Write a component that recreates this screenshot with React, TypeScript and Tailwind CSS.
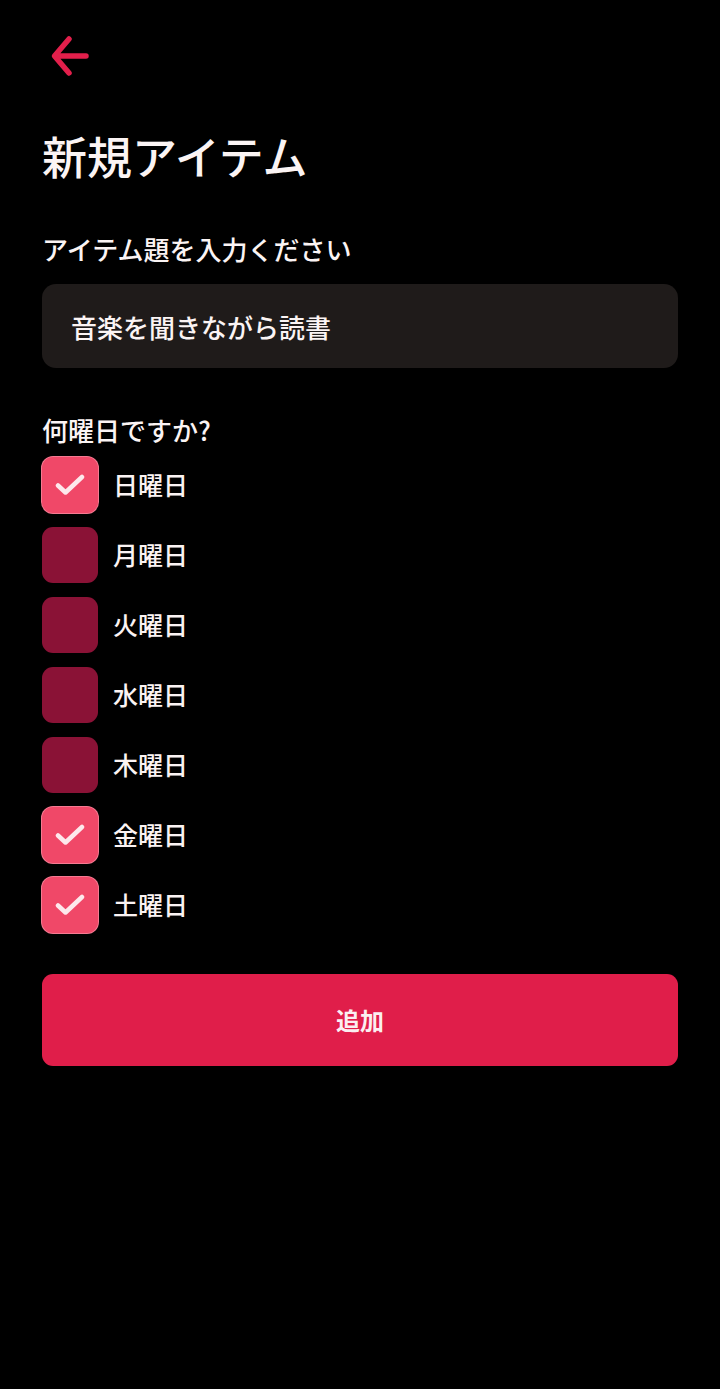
const days = [
  { label: '日曜日', checked: true },
  { label: '月曜日', checked: false },
  { label: '火曜日', checked: false },
  { label: '水曜日', checked: false },
  { label: '木曜日', checked: false },
  { label: '金曜日', checked: true },
  { label: '土曜日', checked: true },
];

function DayCheckbox({ label, checked }: { label: string; checked: boolean }) {
  return (
    <div className="flex h-[70px] items-center gap-[15px]">
      <div
        className={`flex h-[56px] w-[56px] items-center justify-center rounded-[11px] ${
          checked ? 'bg-[#f04868] ring-1 ring-[#f57a92]' : 'bg-[#8a1236]'
        }`}
      >
        {checked && (
          <svg width="30" height="22" viewBox="0 0 30 22" fill="none">
            <path
              d="M3 11.5 L10.5 18.5 L27 3"
              stroke="#fde8ec"
              strokeWidth="4.5"
              strokeLinecap="round"
              strokeLinejoin="round"
            />
          </svg>
        )}
      </div>
      <span className="text-[25px] font-medium text-[#fbf3f3]">{label}</span>
    </div>
  );
}

export default function App() {
  return (
    <div
      className="min-h-[1389px] w-[720px] bg-black px-[42px] pt-[34px]"
      style={{ fontFamily: '"Noto Sans CJK JP", "Noto Sans", sans-serif' }}
    >
      {/* Back */}
      <button className="ml-[3px] flex h-[44px] w-[46px] items-center">
        <svg width="44" height="44" viewBox="0 0 44 44" fill="none">
          <path
            d="M41 22 H10 M24 5 L9.5 22 L24 39"
            stroke="#e21f4b"
            strokeWidth="5.5"
            strokeLinecap="round"
            strokeLinejoin="round"
          />
        </svg>
      </button>

      {/* Title */}
      <h1 className="mt-[48px] text-[45px] font-medium leading-[60px] text-[#fbf4f4]">新規アイテム</h1>

      {/* Item name */}
      <p className="mt-[46px] text-[26px] font-medium leading-[34px] text-[#fbf4f4]">アイテム題を入力ください</p>
      <div className="mt-[18px] flex h-[84px] items-center rounded-[14px] bg-[#1f1b1a] px-[29px]">
        <span className="text-[26px] font-medium text-[#fbf4f4]">音楽を聞きながら読書</span>
      </div>

      {/* Days */}
      <p className="mt-[45px] text-[26px] font-medium leading-[34px] text-[#fbf4f4]">何曜日ですか?</p>
      <div className="mt-[3px] flex flex-col">
        {days.map(d => (
          <DayCheckbox key={d.label} label={d.label} checked={d.checked} />
        ))}
      </div>

      {/* Submit */}
      <button className="mt-[34px] flex h-[92px] w-full items-center justify-center rounded-[11px] bg-[#e01e4a]">
        <span className="text-[24px] font-bold text-[#fbeff1]">追加</span>
      </button>
    </div>
  );
}
